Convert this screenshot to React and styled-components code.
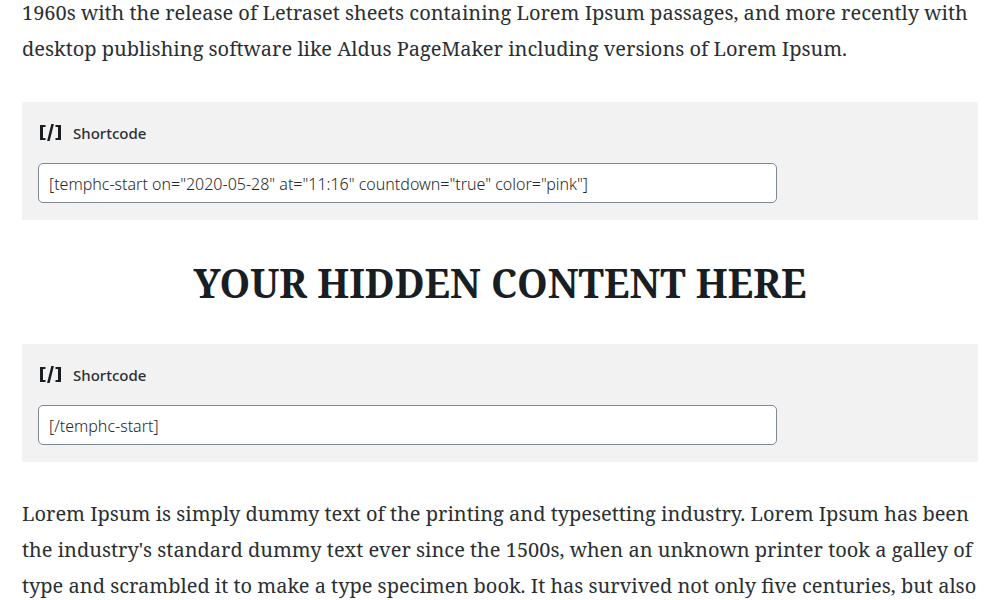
import React from "react";
import styled, { createGlobalStyle } from "styled-components";

const Global = createGlobalStyle`
  * { box-sizing: border-box; }
  body { margin: 0; background: #fff; color: #191e23; overflow: hidden; }
`;
const Article = styled.main`
  padding: 0 22px;
  font-family: "Noto Serif", "DejaVu Serif Condensed", "Liberation Serif", serif;
`;
const Paragraph = styled.p`
  margin: 0;
  color: #2a2f34;
  font-size: 20px;
  line-height: 36px;
  white-space: nowrap;
`;
const Intro = styled(Paragraph)`
  margin-top: -5px;
  margin-bottom: 35px;
`;
const Block = styled.section`
  background: #f2f2f2;
  padding: 16px 16px 17px;
`;
const BlockLabel = styled.label`
  display: flex;
  align-items: center;
  gap: 10px;
  height: 30px;
  margin-bottom: 15px;
  color: #2a2f34;
  font: 500 15px/30px "Noto Sans", "Open Sans", sans-serif;
`;
const CodeInput = styled.input`
  display: block;
  width: 80%;
  height: 40px;
  padding: 4px 10px 2px;
  border: 1px solid #7e8993;
  border-radius: 5px;
  background: #fff;
  color: #23282d;
  font: 300 16px "Noto Sans", "Open Sans", sans-serif;
`;
const Heading = styled.h2`
  margin: 33px 0 31px;
  text-align: center;
  font-size: 39px;
  line-height: 60px;
`;
const Outro = styled(Paragraph)`
  margin-top: 34px;
`;

function Shortcode({ id, value }) {
  return (
    <Block>
      <BlockLabel htmlFor={id}>
        <svg width="25" height="20" viewBox="0 0 25 20" fill="#191e23" aria-hidden="true">
          <path d="M2 2h5.500v2H5v11h2.500v2H2zM17.500 2H23v15h-5.500v-2H20V4h-2.500zM13.300 1h2.600l-4.200 17H9.100z" />
        </svg>
        Shortcode
      </BlockLabel>
      <CodeInput id={id} defaultValue={value} />
    </Block>
  );
}

export default function App() {
  return (
    <Article>
      <Global />
      <Intro>
        1960s with the release of Letraset sheets containing Lorem Ipsum passages, and more recently with
        <br />
        desktop publishing software like Aldus PageMaker including versions of Lorem Ipsum.
      </Intro>
      <Shortcode id="start" value={'[temphc-start on="2020-05-28" at="11:16" countdown="true" color="pink"]'} />
      <Heading>YOUR HIDDEN CONTENT HERE</Heading>
      <Shortcode id="end" value="[/temphc-start]" />
      <Outro>
        Lorem Ipsum is simply dummy text of the printing and typesetting industry. Lorem Ipsum has been
        <br />
        the industry's standard dummy text ever since the 1500s, when an unknown printer took a galley of
        <br />
        type and scrambled it to make a type specimen book. It has survived not only five centuries, but also
      </Outro>
    </Article>
  );
}
